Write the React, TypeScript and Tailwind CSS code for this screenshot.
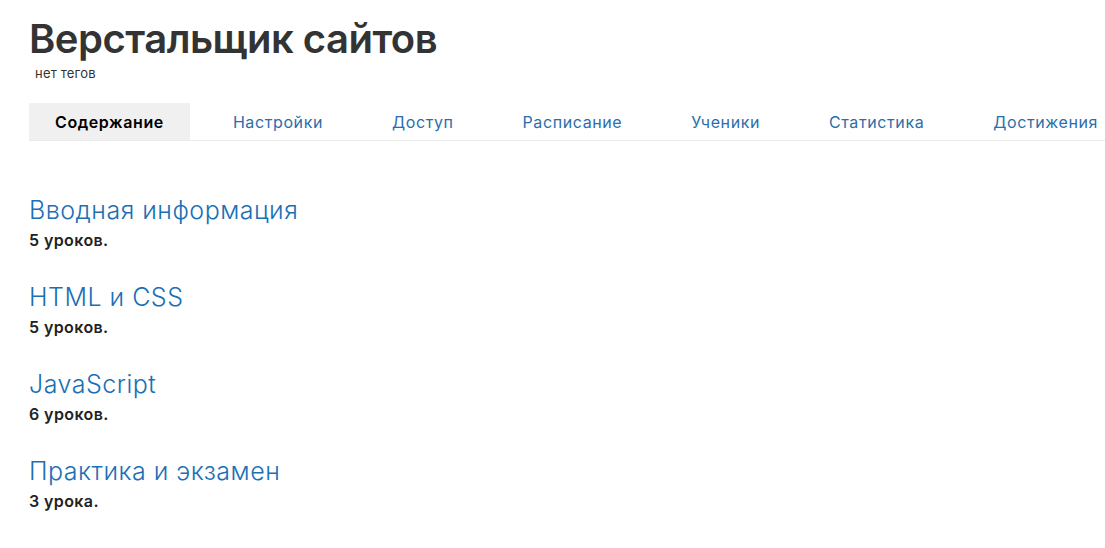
import React from 'react'

const tabs = ['Содержание', 'Настройки', 'Доступ', 'Расписание', 'Ученики', 'Статистика', 'Достижения']

const sections = [
  { title: 'Вводная информация', lessons: '5 уроков.' },
  { title: 'HTML и CSS', lessons: '5 уроков.' },
  { title: 'JavaScript', lessons: '6 уроков.' },
  { title: 'Практика и экзамен', lessons: '3 урока.' },
]

export default function App() {
  return (
    <div className="min-h-screen bg-white pl-[29px] font-['Inter','Noto_Sans',sans-serif] text-[#333]">
      <h1 className="pt-[15px] text-[40px] font-semibold leading-[48px] tracking-[-0.5px] text-[#333]">
        Верстальщик сайтов
      </h1>
      <div className="ml-[6px] mt-[2px] text-[13px] leading-[16px] tracking-[0.2px] text-[#333]">нет тегов</div>

      <div className="mt-[22px] flex gap-[17px] border-b border-[#ebebeb]">
        {tabs.map((tab, index) => (
          <div
            key={tab}
            className={`flex h-[37px] shrink-0 items-center px-[26px] text-[16px] tracking-[0.6px] ${
              index === 0 ? 'bg-[#f0f0f0] font-semibold text-black' : 'text-[#2a6eab]'
            }`}
          >
            {tab}
          </div>
        ))}
      </div>

      <div className="mt-[53px] flex flex-col gap-[28px]">
        {sections.map((section) => (
          <div key={section.title}>
            <div className="text-[25px] font-light leading-[32px] tracking-[0.5px] text-[#1a6fb5]">
              {section.title}
            </div>
            <div className="mt-[1px] text-[16px] font-semibold leading-[26px] tracking-[0.4px] text-[#222]">
              {section.lessons}
            </div>
          </div>
        ))}
      </div>
    </div>
  )
}
